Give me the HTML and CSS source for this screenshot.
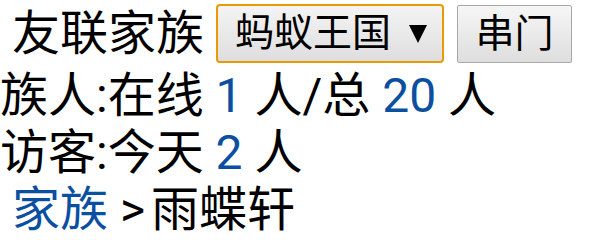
FILE: index.html
```html
<!DOCTYPE html>
<html lang="zh">
<head>
<meta charset="utf-8">
<link rel="stylesheet" href="styles.css">
</head>
<body>
<div class="page">
  <div class="row head">
    <span class="label">友联家族</span>
    <span class="select"><span class="sel-text">蚂蚁王国</span><span class="arrow"></span></span>
    <span class="btn">串门</span>
  </div>
  <div class="row">族人:在线 <span class="num">1</span> 人/总 <span class="num">20</span> 人</div>
  <div class="row">访客:今天 <span class="num">2</span> 人</div>
  <div class="row crumb"><a class="link" href="#">家族</a> <span class="sep">&gt;</span>雨蝶轩</div>
</div>
</body>
</html>
```
FILE: styles.css
```css
html, body {
  margin: 0;
  padding: 0;
  background: #ffffff;
}
.page {
  font-family: Roboto, "Noto Sans CJK SC", sans-serif;
  font-size: 48px;
  color: #000000;
  width: 595px;
  height: 239px;
  overflow: hidden;
}
.row {
  line-height: 57px;
  height: 57px;
  white-space: nowrap;
}
.head {
  display: flex;
  align-items: center;
  height: 67px;
}
.label {
  padding-left: 12px;
  margin-right: 12px;
}
.select {
  box-sizing: border-box;
  display: flex;
  align-items: center;
  width: 228px;
  height: 59px;
  padding-left: 17px;
  border: 2px solid #e89a0b;
  border-radius: 4px;
  background: linear-gradient(#f4f4f4, #dedede);
  font-size: 39px;
  line-height: 55px;
}
.arrow {
  width: 0;
  height: 0;
  margin-left: 18px;
  border-left: 9px solid transparent;
  border-right: 9px solid transparent;
  border-top: 18px solid #000000;
}
.btn {
  box-sizing: border-box;
  margin-left: 13px;
  width: 115px;
  height: 58px;
  line-height: 56px;
  text-align: center;
  border: 1px solid #a8a8a8;
  border-radius: 2px;
  background: linear-gradient(#f6f6f6, #dedede);
  font-size: 39px;
}
.num {
  color: #0b4fa0;
}
.crumb {
  padding-left: 12px;
}
.sep {
  margin-right: 6px;
}
.link {
  color: #0b4fa0;
  text-decoration: none;
}
```
